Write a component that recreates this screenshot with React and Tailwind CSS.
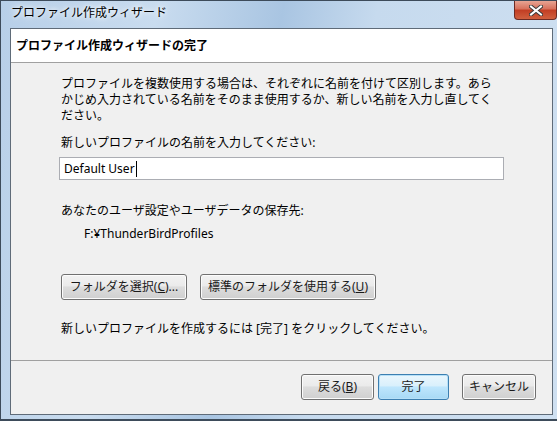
import React from 'react';

const font = { fontFamily: '"Noto Sans", "Noto Sans CJK JP", sans-serif' };

const Btn = ({ children, className = '', primary = false }) => (
  <button
    className={
      'h-[26px] rounded-[3px] border text-[12px] leading-none text-[#1a1a1a] ' +
      (primary
        ? 'border-[#3c7fb1] bg-[linear-gradient(#eaf6fd_0%,#d9f0fc_45%,#bee6fd_50%,#a7d9f5_100%)] shadow-[inset_0_0_0_1px_#b6e0f8] '
        : 'border-[#707070] bg-[linear-gradient(#f2f2f2_0%,#ebebeb_45%,#dddddd_50%,#cfcfcf_100%)] shadow-[inset_0_0_0_1px_#fcfcfc] ') +
      className
    }
  >
    {children}
  </button>
);

const CloseButton = () => (
  <div className="h-[19px] w-[43px] rounded-b-[4px] border border-t-0 border-[#6d2b24] bg-[linear-gradient(#e8a493_0%,#d7705b_45%,#c23d23_50%,#d0603f_100%)] flex items-center justify-center">
    <svg width="14" height="11" viewBox="0 0 14 11">
      <path d="M2 1.5 L12 9.5 M12 1.5 L2 9.5" stroke="#3a3a3a" strokeWidth="4" strokeLinecap="square" />
      <path d="M2 1.5 L12 9.5 M12 1.5 L2 9.5" stroke="#ffffff" strokeWidth="2" strokeLinecap="square" />
    </svg>
  </div>
);

export default function App() {
  return (
    <div
      style={font}
      className="w-[557px] h-[421px] overflow-hidden border-l border-t border-b-2 border-[#3d4b5a] bg-[linear-gradient(100deg,#b7cfe8_0%,#c9dcef_25%,#a9c5e2_45%,#c6daee_60%,#cfe0f1_100%)] flex flex-col"
    >
      {/* Title bar */}
      <div className="h-[27px] flex items-start justify-between">
        <div className="pl-[10px] pt-[4px] text-[12px] leading-[16px] text-black [text-shadow:0_0_8px_#ffffff,0_0_4px_#ffffff]">
          プロファイル作成ウィザード
        </div>
        <CloseButton />
      </div>

      {/* Client area */}
      <div className="ml-[9px] w-[543px] h-[387px] border border-[#5f6b78] bg-[#f0f0f0] flex flex-col">
        <div className="h-[34px] bg-white border-b border-[#a0a0a0] pl-[5px] flex items-center">
          <span className="text-[12px] font-bold leading-[16px] text-black">プロファイル作成ウィザードの完了</span>
        </div>

        <div className="flex-1 pl-[50px] pt-[13px] text-[12px] leading-[16px] text-black">
          <p className="w-[440px]">
            プロファイルを複数使用する場合は、それぞれに名前を付けて区別します。あらかじめ入力されている名前をそのまま使用するか、新しい名前を入力し直してください。
          </p>
          <p className="mt-[11px]">新しいプロファイルの名前を入力してください:</p>
          <div className="mt-[6px] -ml-[2px] w-[445px] h-[23px] bg-white border border-[#abadb3] flex items-center pl-[4px] text-[12px]">
            <span>Default User</span>
            <span className="ml-[1px] w-px h-[16px] bg-black" />
          </div>
          <p className="mt-[23px]">あなたのユーザ設定やユーザデータの保存先:</p>
          <p className="mt-[7px] pl-[23px]">F:¥ThunderBirdProfiles</p>
          <div className="mt-[32px] flex gap-[13px]">
            <Btn className="w-[126px]">
              フォルダを選択(<span className="underline">C</span>)...
            </Btn>
            <Btn className="w-[176px]">
              標準のフォルダを使用する(<span className="underline">U</span>)
            </Btn>
          </div>
          <p className="mt-[21px]">新しいプロファイルを作成するには [完了] をクリックしてください。</p>
        </div>

        <div className="h-[54px] border-t border-[#a0a0a0] flex items-start pt-[13px] pl-[290px]">
          <Btn className="w-[73px]">
            戻る(<span className="underline">B</span>)
          </Btn>
          <Btn primary className="ml-[4px] w-[71px]">完了</Btn>
          <Btn className="ml-[13px] w-[74px]">キャンセル</Btn>
        </div>
      </div>
    </div>
  );
}
